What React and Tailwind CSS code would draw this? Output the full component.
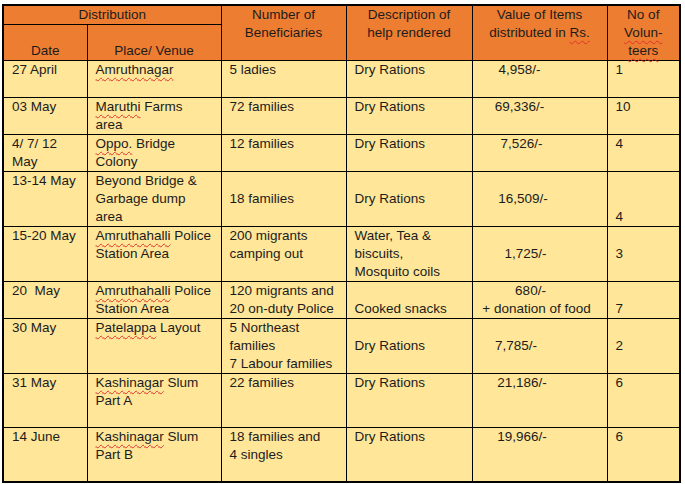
const sq = 'underline decoration-wavy decoration-[#e0312b] decoration-1 underline-offset-[3px]';

const Sq = ({ children }) => <span className={sq}>{children}</span>;

const rows = [
  {
    h: 'h-[37px]',
    date: ['27 April'],
    place: [<Sq key="a">Amruthnagar</Sq>],
    ben: ['5 ladies'],
    desc: ['Dry Rations'],
    val: [['4,958/-', 'pr-[40px]']],
    vol: ['1'],
  },
  {
    h: 'h-[37px]',
    date: ['03 May'],
    place: [<><Sq>Maruthi</Sq> Farms</>, 'area'],
    ben: ['72 families'],
    desc: ['Dry Rations'],
    val: [['69,336/-', 'pr-[40px]']],
    vol: ['10'],
  },
  {
    h: 'h-[36px]',
    date: ['4/ 7/ 12', 'May'],
    place: [<><Sq>Oppo.</Sq> Bridge</>, 'Colony'],
    ben: ['12 families'],
    desc: ['Dry Rations'],
    val: [['7,526/-', 'pr-[36px]']],
    vol: ['4'],
  },
  {
    h: 'h-[54px]',
    date: ['13-14 May'],
    place: ['Beyond Bridge &', 'Garbage dump', 'area'],
    ben: ['18 families'],
    benAlign: 'align-middle',
    desc: ['Dry Rations'],
    descAlign: 'align-middle',
    val: [['16,509/-', 'pr-[33px]']],
    valAlign: 'align-middle',
    vol: ['4'],
    volAlign: 'align-bottom',
  },
  {
    h: 'h-[54px]',
    date: ['15-20 May'],
    place: [<><Sq>Amruthahalli</Sq> Police</>, 'Station Area'],
    ben: ['200 migrants', 'camping out'],
    desc: ['Water, Tea &', 'biscuits,', 'Mosquito coils'],
    val: [['1,725/-', 'pr-[28px]']],
    valAlign: 'align-middle',
    vol: ['3'],
    volAlign: 'align-middle',
  },
  {
    h: 'h-[36px]',
    date: ['20  May'],
    place: [<><Sq>Amruthahalli</Sq> Police</>, 'Station Area'],
    ben: ['120 migrants and', '20 on-duty Police'],
    desc: ['Cooked snacks'],
    descAlign: 'align-bottom',
    val: [['680/-', 'pr-[18px]'], ['+ donation of food', 'pr-[6px]']],
    vol: ['7'],
    volAlign: 'align-bottom',
  },
  {
    h: 'h-[54px]',
    date: ['30 May'],
    place: [<><Sq>Patelappa</Sq> Layout</>],
    ben: ['5 Northeast', 'families', '7 Labour families'],
    desc: ['Dry Rations'],
    descAlign: 'align-middle',
    val: [['7,785/-', 'pr-[47px]']],
    valAlign: 'align-middle',
    vol: ['2'],
    volAlign: 'align-middle',
  },
  {
    h: 'h-[54px]',
    date: ['31 May'],
    place: [<><Sq>Kashinagar</Sq> Slum</>, 'Part A'],
    ben: ['22 families'],
    desc: ['Dry Rations'],
    val: [['21,186/-', 'pr-[35px]']],
    vol: ['6'],
  },
  {
    h: 'h-[54px]',
    date: ['14 June'],
    place: [<><Sq>Kashinagar</Sq> Slum</>, 'Part B'],
    ben: ['18 families and', '4 singles'],
    desc: ['Dry Rations'],
    val: [['19,966/-', 'pr-[35px]']],
    vol: ['6'],
  },
];

const cell = 'border border-black pl-[8px] pr-[2px] py-0 whitespace-pre';

const Lines = ({ items }) => items.map((t, i) => <div key={i}>{t}</div>);

export default function App() {
  return (
    <div className="w-[685px] h-[484px] bg-white pt-[4px] pl-[2px] font-['Liberation_Sans',Arial,sans-serif] text-[13.5px] leading-[18px] text-[#1c1c1c]">
      <table className="table-fixed border-collapse border-2 border-black w-[677px]">
        <colgroup>
          <col className="w-[84px]" />
          <col className="w-[134px]" />
          <col className="w-[125px]" />
          <col className="w-[126px]" />
          <col className="w-[135px]" />
          <col className="w-[73px]" />
        </colgroup>
        <thead className="bg-[#ed7d31]">
          <tr className="h-[18px]">
            <th colSpan={2} className="border border-black p-0 font-normal text-center align-top">Distribution</th>
            <th rowSpan={2} className="border border-black p-0 font-normal text-center align-top">
              <div>Number of</div>
              <div>Beneficiaries</div>
            </th>
            <th rowSpan={2} className="border border-black p-0 font-normal text-center align-top">
              <div>Description of</div>
              <div>help rendered</div>
            </th>
            <th rowSpan={2} className="border border-black p-0 font-normal text-center align-top">
              <div>Value of Items</div>
              <div>distributed in <Sq>Rs.</Sq></div>
            </th>
            <th rowSpan={2} className="border border-black p-0 font-normal text-center align-top">
              <div>No of</div>
              <div><Sq>Volun-</Sq></div>
              <div><Sq>teers</Sq></div>
            </th>
          </tr>
          <tr className="h-[36px]">
            <th className="border border-black p-0 font-normal text-center align-bottom">Date</th>
            <th className="border border-black p-0 font-normal text-center align-bottom">Place/ Venue</th>
          </tr>
        </thead>
        <tbody className="bg-[#ffe699]">
          {rows.map((r, i) => (
            <tr key={i} className={r.h}>
              <td className={`${cell} align-top`}><Lines items={r.date} /></td>
              <td className={`${cell} align-top`}><Lines items={r.place} /></td>
              <td className={`${cell} ${r.benAlign || 'align-top'}`}><Lines items={r.ben} /></td>
              <td className={`${cell} ${r.descAlign || 'align-top'}`}><Lines items={r.desc} /></td>
              <td className={`border border-black p-0 text-center whitespace-pre ${r.valAlign || 'align-top'}`}>
                {r.val.map(([t, pad], j) => (
                  <div key={j} className={pad}>{t}</div>
                ))}
              </td>
              <td className={`${cell} ${r.volAlign || 'align-top'}`}><Lines items={r.vol} /></td>
            </tr>
          ))}
        </tbody>
      </table>
    </div>
  );
}
